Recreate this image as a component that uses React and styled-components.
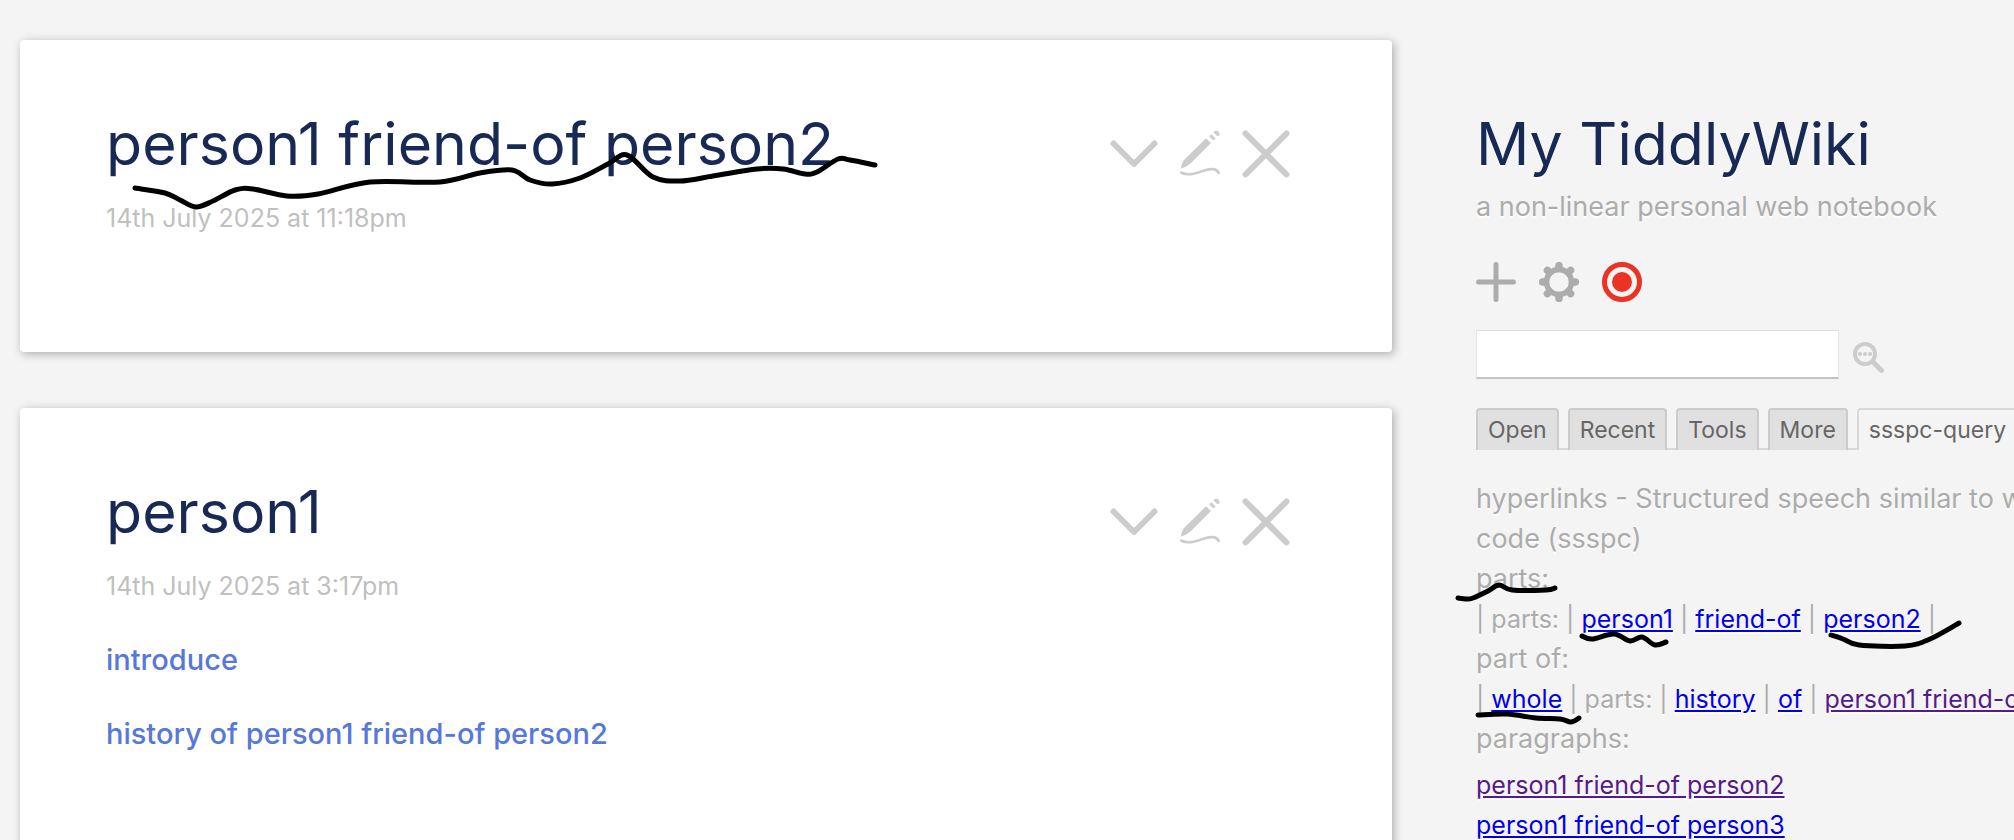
import { useState } from "react";
import styled, { createGlobalStyle } from "styled-components";

const tiddlers = [
  {
    title: "person1 friend-of person2",
    date: "14th July 2025 at 11:18pm",
    links: [],
    scribble: [
      [29, 86], [59, 91], [74, 98], [90, 105], [107, 99], [129, 88], [147, 87],
      [181, 94], [212, 92], [264, 80], [334, 80], [374, 71], [406, 68],
      [424, 78], [446, 82], [474, 76], [502, 62], [521, 53], [547, 75],
      [574, 79], [607, 74], [651, 67], [677, 67], [699, 72], [711, 70],
      [732, 57], [744, 58], [769, 63],
    ],
  },
  {
    title: "person1",
    date: "14th July 2025 at 3:17pm",
    links: ["introduce", "history of person1 friend-of person2"],
  },
];

const tabs = ["Open", "Recent", "Tools", "More", "ssspc-query"];

const marks = {
  parts: [[-18, 39], [-10, 40], [-3, 39], [12, 32], [23, 26], [36, 31], [70, 31], [79, 29]],
  person1: [[1, 37], [11, 40], [33, 35], [49, 42], [61, 38], [74, 46], [85, 43]],
  person2: [[8, 36], [20, 40], [36, 46], [82, 47], [107, 40], [136, 24]],
  whole: [[-13, 36], [16, 35], [45, 39], [69, 40], [80, 43], [88, 39]],
};

// smooth curve through the points of a pen stroke
const toPath = (points) => {
  let d = `M${points[0].join(" ")}`;
  for (let i = 0; i < points.length - 1; i++) {
    const p0 = points[i - 1] || points[i];
    const p1 = points[i];
    const p2 = points[i + 1];
    const p3 = points[i + 2] || p2;
    const c1 = [p1[0] + (p2[0] - p0[0]) / 6, p1[1] + (p2[1] - p0[1]) / 6];
    const c2 = [p2[0] - (p3[0] - p1[0]) / 6, p2[1] - (p3[1] - p1[1]) / 6];
    d += ` C${c1.join(" ")} ${c2.join(" ")} ${p2.join(" ")}`;
  }
  return d;
};

export default function App() {
  return (
    <>
      <GlobalStyle />
      <Page>
        <StoryRiver>
          {tiddlers.map((tiddler) => (
            <Tiddler key={tiddler.title} {...tiddler} />
          ))}
        </StoryRiver>
        <Sidebar />
      </Page>
    </>
  );
}

function Scribble({ points }) {
  return (
    <ScribbleSvg width="1" height="1" aria-hidden="true">
      <path d={toPath(points)} />
    </ScribbleSvg>
  );
}

function Tiddler({ title, date, links, scribble }) {
  return (
    <Frame>
      <TitleBar>
        <Title>
          {title}
          {scribble && <Scribble points={scribble} />}
        </Title>
        <Controls>
          <IconButton type="button" aria-label="More actions">
            <LineIcon width="48" height="48">
              <path d="M3.5 13.5 L24 34 L44.5 13.5" />
            </LineIcon>
          </IconButton>
          <IconButton type="button" aria-label="Edit">
            <svg width="40" height="48" fill="currentColor">
              <path d="M0.8 38.7 C1.6 34 2.6 31.4 5 29 L26 8.3 L31 13 L10.5 33.6 C8 36 5 37.3 0.8 38.7 Z" />
              <path d="M29 6.2 L31.2 4.2 L35.6 8.6 L33.5 10.6 Z" />
              <path d="M33.4 2.4 C36.2 -2 42.2 3.2 38 6.6 Z" />
              <path
                d="M1.4 42.7 C13 48 24 38 33.5 39.2 C36 39.5 37.6 41 38.6 42.8"
                fill="none"
                stroke="currentColor"
                strokeWidth="2.7"
                strokeLinecap="round"
              />
            </svg>
          </IconButton>
          <IconButton type="button" aria-label="Close">
            <LineIcon width="48" height="48">
              <path d="M3.5 3.5 L44.5 44.5 M44.5 3.5 L3.5 44.5" />
            </LineIcon>
          </IconButton>
        </Controls>
      </TitleBar>
      <Subtitle>{date}</Subtitle>
      {links.map((text) => (
        <Paragraph key={text}>
          <TiddlerLink href="#">{text}</TiddlerLink>
        </Paragraph>
      ))}
    </Frame>
  );
}

function Sidebar() {
  const [search, setSearch] = useState("");
  const [activeTab, setActiveTab] = useState("ssspc-query");

  return (
    <Aside>
      <SiteTitle>My TiddlyWiki</SiteTitle>
      <SiteSubtitle>a non-linear personal web notebook</SiteSubtitle>
      <PageControls>
        <IconButton type="button" aria-label="New tiddler">
          <LineIcon width="40" height="40" $weight={5}>
            <path d="M20 2.5 V37.5 M2.5 20 H37.5" />
          </LineIcon>
        </IconButton>
        <IconButton type="button" aria-label="Control panel">
          <svg width="40" height="40" fill="none" stroke="currentColor">
            <circle cx="20" cy="20" r="12.5" strokeWidth="5.4" />
            {[0, 45, 90, 135].map((angle) => (
              <path
                key={angle}
                d="M20 3.6 V6.5 M20 33.5 V36.4"
                strokeWidth="7.4"
                strokeLinecap="round"
                transform={`rotate(${angle} 20 20)`}
              />
            ))}
          </svg>
        </IconButton>
        <IconButton type="button" aria-label="Save wiki" $color="#eb3223">
          <svg width="40" height="40" fill="currentColor">
            <circle cx="20" cy="20" r="10" />
            <circle
              cx="20"
              cy="20"
              r="17.5"
              fill="none"
              stroke="currentColor"
              strokeWidth="5"
            />
          </svg>
        </IconButton>
      </PageControls>
      <SearchBar>
        <SearchInput
          type="search"
          aria-label="Search"
          value={search}
          onChange={(e) => setSearch(e.target.value)}
        />
        <IconButton type="button" aria-label="Advanced search" $color="#ccc">
          <svg width="32" height="38" viewBox="0 -6 32 38" fill="currentColor">
            <circle
              cx="12"
              cy="12"
              r="10"
              fill="none"
              stroke="currentColor"
              strokeWidth="4"
            />
            <path
              d="M20 20 L28.5 28.5"
              stroke="currentColor"
              strokeWidth="5"
              strokeLinecap="round"
            />
            <circle cx="7" cy="12" r="2" />
            <circle cx="12" cy="12" r="2" />
            <circle cx="17" cy="12" r="2" />
          </svg>
        </IconButton>
      </SearchBar>
      <TabList>
        {tabs.map((tab) => (
          <Tab
            key={tab}
            type="button"
            $active={tab === activeTab}
            onClick={() => setActiveTab(tab)}
          >
            {tab}
          </Tab>
        ))}
      </TabList>
      <Line>hyperlinks - Structured speech similar to wiki</Line>
      <Line>code (ssspc)</Line>
      <Line>
        <Marked>
          parts:
          <Scribble points={marks.parts} />
        </Marked>
      </Line>
      <Line $small>
        | parts: |{" "}
        <Marked>
          <WikiLink href="#">person1</WikiLink>
          <Scribble points={marks.person1} />
        </Marked>{" "}
        | <WikiLink href="#">friend-of</WikiLink> |{" "}
        <Marked>
          <WikiLink href="#">person2</WikiLink>
          <Scribble points={marks.person2} />
        </Marked>{" "}
        |
      </Line>
      <Line>part of:</Line>
      <Line $small>
        |{" "}
        <Marked>
          <WikiLink href="#">whole</WikiLink>
          <Scribble points={marks.whole} />
        </Marked>{" "}
        | parts: | <WikiLink href="#">history</WikiLink> |{" "}
        <WikiLink href="#">of</WikiLink> |{" "}
        <WikiLink href="#" $visited>
          person1 friend-of person2
        </WikiLink>
      </Line>
      <Line>paragraphs:</Line>
      <Results>
        <Line $small>
          <WikiLink href="#" $visited>
            person1 friend-of person2
          </WikiLink>
        </Line>
        <Line $small>
          <WikiLink href="#">person1 friend-of person3</WikiLink>
        </Line>
      </Results>
    </Aside>
  );
}

const GlobalStyle = createGlobalStyle`
  * {
    box-sizing: border-box;
  }
  body {
    margin: 0;
    background: #f4f4f4;
    font-family: Inter, "Liberation Sans", sans-serif;
  }
`;

const Page = styled.div`
  display: grid;
  grid-template-columns: minmax(0, 1fr) 602px;
  overflow: hidden;
`;

const StoryRiver = styled.main`
  display: flex;
  flex-direction: column;
  gap: 56px;
  padding: 40px 20px;
`;

const Frame = styled.section`
  background: #fff;
  padding: 62px 86px 112px;
  border-radius: 4px;
  box-shadow: 2px 2px 10px rgba(0, 0, 0, 0.3);
`;

const TitleBar = styled.div`
  display: flex;
  justify-content: space-between;
`;

const Title = styled.h2`
  position: relative;
  margin: 0;
  font-size: 59px;
  line-height: 84px;
  font-weight: 400;
  color: #182955;
`;

const ScribbleSvg = styled.svg`
  position: absolute;
  left: 0;
  top: 0;
  z-index: 1;
  overflow: visible;
  pointer-events: none;
  fill: none;
  stroke: #000;
  stroke-width: 5;
  stroke-linecap: round;
`;

const Controls = styled.div`
  display: flex;
  align-items: flex-start;
  gap: 22px;
  padding: 28px 16px 0 0;
  color: #ccc;
`;

const IconButton = styled.button`
  border: 0;
  background: none;
  padding: 0;
  color: ${(p) => p.$color || "inherit"};
  cursor: pointer;

  svg {
    display: block;
  }
`;

const LineIcon = styled.svg`
  fill: none;
  stroke: currentColor;
  stroke-width: ${(p) => p.$weight || 6};
  stroke-linecap: round;
  stroke-linejoin: round;
`;

const Subtitle = styled.div`
  margin-top: 10px;
  font-size: 25px;
  line-height: 44px;
  color: #c0c0c0;
`;

const Paragraph = styled.p`
  margin: 30px 0 0;
  font-size: 29px;
  line-height: 44px;
`;

const TiddlerLink = styled.a`
  color: #5778d8;
  font-weight: 500;
  text-decoration: none;
`;

const Aside = styled.aside`
  padding: 102px 0 0 64px;
  color: #acacac;
  white-space: nowrap;
  text-shadow: 0 2px 0 rgba(255, 255, 255, 0.9);
`;

const SiteTitle = styled.h1`
  margin: 0;
  font-size: 59px;
  line-height: 84px;
  font-weight: 400;
  color: #182955;
`;

const SiteSubtitle = styled.div`
  font-size: 27px;
  line-height: 42px;
`;

const PageControls = styled.div`
  display: flex;
  gap: 23px;
  margin-top: 34px;
`;

const SearchBar = styled.div`
  display: flex;
  align-items: center;
  gap: 14px;
  margin-top: 28px;
`;

const SearchInput = styled.input`
  width: 363px;
  height: 49px;
  padding: 6px;
  background: #fff;
  border: 1px solid #e4e4e4;
  border-top-color: #dcdcdc;
  border-bottom: 2px solid #c4c4c4;
  border-radius: 0;
  outline: none;
  font: inherit;
  font-size: 25px;
  appearance: none;
`;

const TabList = styled.div`
  display: flex;
  gap: 9px;
  margin: 29px 0;
  box-shadow: inset 0 -2px 0 #d8d8d8;
`;

const Tab = styled.button`
  flex: none;
  height: 42px;
  padding: 0 10px;
  border: 2px solid ${(p) => (p.$active ? "#d8d8d8" : "#ccc")};
  border-bottom: 0;
  border-radius: 4px 4px 0 0;
  background: ${(p) => (p.$active ? "#f4f4f4" : "#e0e0e0")};
  color: #666;
  font-family: inherit;
  font-size: 23px;
  line-height: 40px;
  cursor: pointer;
`;

const Line = styled.div`
  font-size: ${(p) => (p.$small ? 25 : 27)}px;
  line-height: 40px;
  height: 40px;
`;

const Marked = styled.span`
  position: relative;
  display: inline-block;
`;

const WikiLink = styled.a`
  color: ${(p) => (p.$visited ? "#551a8b" : "#0000ee")};
`;

const Results = styled.div`
  margin-top: 6px;
`;
